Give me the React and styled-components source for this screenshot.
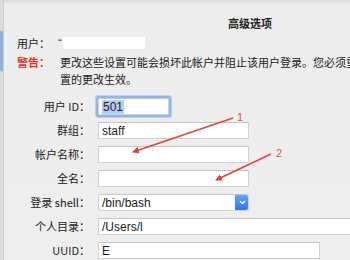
import React from 'react'
import styled, { createGlobalStyle } from 'styled-components'

const GlobalStyle = createGlobalStyle`
  html, body {
    margin: 0;
    padding: 0;
    background: #ececec;
  }
  body {
    font-family: "Noto Sans CJK SC", "Liberation Sans", sans-serif;
    font-size: 11px;
    color: #222;
  }
`

const Screen = styled.div`
  position: relative;
  width: 350px;
  height: 260px;
  overflow: hidden;
  display: flex;
  background: #eeeeee;
`

// window behind the dialog, peeking in at the left edge
const EdgeStrip = styled.div`
  width: 3px;
  flex: none;
  background: linear-gradient(to bottom, #dcdcdc 0, #dcdcdc 30px, #8fb0dc 32px, #8fb0dc 70px, #dcdcdc 72px);
  border-right: 1px solid #cdcdcd;
`

const Sheet = styled.div`
  flex: 1;
  background: linear-gradient(to bottom, #d9d9d9 0, #ededed 5px, #eeeeee 100%);
  padding-top: 15px;
`

const Title = styled.div`
  padding-left: 224px;
  font-size: 11px;
  font-weight: 600;
  line-height: 16px;
  color: #222;
`

const InfoRow = styled.div`
  display: flex;
  align-items: flex-start;
  margin-top: ${p => p.$top || 0}px;
  line-height: 17px;
`

const InfoLabel = styled.span`
  width: 36px;
  padding-left: 13px;
  flex: none;
  color: ${p => (p.$warn ? '#e0362c' : '#222')};
  font-weight: ${p => (p.$warn ? 600 : 400)};
`

const Quote = styled.span`
  margin-left: 5px;
  font-family: "Liberation Sans", sans-serif;
  color: #333;
`

const Redact = styled.span`
  display: inline-block;
  width: ${p => p.$w}px;
  height: 12px;
  margin: 2px 0 0 ${p => p.$left || 0}px;
  background: #ffffff;
`

const WarnText = styled.div`
  white-space: nowrap;
  margin-left: 7px;
`

const Form = styled.div`
  display: grid;
  grid-template-columns: 86px 1fr;
  column-gap: 8px;
  row-gap: 7px;
  margin-top: 10px;
  align-items: center;
`

const Label = styled.div`
  text-align: right;
  line-height: 17px;
  white-space: nowrap;
`

const Field = styled.div`
  box-sizing: border-box;
  width: ${p => p.$w}px;
  height: 17px;
  background: #fff;
  border: 1px solid #d2d2d2;
  border-top-color: #c4c4c4;
  padding-left: 3px;
  display: flex;
  align-items: center;
  font-family: "Liberation Sans", sans-serif;
  font-size: 12px;
  color: #222;
  box-shadow: ${p => (p.$focus ? '0 0 0 2px #8fb4ee, 0 0 0 3px #b9cff3' : 'none')};
  border-radius: ${p => (p.$focus ? '1px' : '0')};
`

const Selected = styled.span`
  background: #b4cdf2;
  padding: 0 1px;
  line-height: 14px;
`

const Popup = styled(Field)`
  padding-right: 0;
  justify-content: space-between;
  border-radius: 3px;
  overflow: hidden;
`

const PopupButton = styled.span`
  width: 14px;
  height: 17px;
  margin: -1px -1px -1px 0;
  border-radius: 0 3px 3px 0;
  background: linear-gradient(to bottom, #6aa6fb, #2f72ea);
  display: flex;
  align-items: center;
  justify-content: center;
`

const Annotations = styled.svg`
  position: absolute;
  left: 0;
  top: 0;
  pointer-events: none;
`

const Num = styled.text`
  font-family: "Liberation Sans", sans-serif;
  font-size: 11px;
  fill: #e05246;
`

const rows = [
  { label: '用户 ID：', value: <Selected>501</Selected>, w: 71, focus: true },
  { label: '群组：', value: 'staff', w: 151 },
  { label: '帐户名称：', value: '', w: 151 },
  { label: '全名：', value: '', w: 151 },
  { label: '登录 shell：', value: '/bin/bash', w: 151, popup: true },
  { label: '个人目录：', value: '/Users/l', w: 280 },
  { label: 'UUID：', value: 'E', w: 222 },
]

export default function App() {
  return (
    <Screen>
      <GlobalStyle />
      <EdgeStrip />
      <Sheet>
        <Title>高级选项</Title>
        <InfoRow $top={4}>
          <InfoLabel>用户：</InfoLabel>
          <Quote>“</Quote>
          <Redact $w={82} $left={1} />
        </InfoRow>
        <InfoRow $top={2}>
          <InfoLabel $warn>警告：</InfoLabel>
          <WarnText>
            更改这些设置可能会损坏此帐户并阻止该用户登录。您必须重新启动电脑才能使这些设
            <br />
            置的更改生效。
          </WarnText>
        </InfoRow>
        <Form>
          {rows.map(r => (
            <React.Fragment key={r.label}>
              <Label>{r.label}</Label>
              {r.popup ? (
                <Popup $w={r.w}>
                  {r.value}
                  <PopupButton>
                    <svg width="7" height="5" viewBox="0 0 7 5">
                      <path d="M1 1 L3.5 3.5 L6 1" fill="none" stroke="#fff" strokeWidth="1.3" />
                    </svg>
                  </PopupButton>
                </Popup>
              ) : (
                <Field $w={r.w} $focus={r.focus}>{r.value}</Field>
              )}
            </React.Fragment>
          ))}
        </Form>
      </Sheet>
      <Annotations width="350" height="260" viewBox="0 0 350 260">
        <defs>
          <marker id="head" markerWidth="8" markerHeight="8" refX="6" refY="4" orient="auto" markerUnits="userSpaceOnUse">
            <path d="M0 0.5 L7 4 L0 7.5 Z" fill="#e0453a" />
          </marker>
        </defs>
        <line x1="233" y1="118" x2="133" y2="152" stroke="#e0453a" strokeWidth="1.6" markerEnd="url(#head)" />
        <Num x="237" y="121">1</Num>
        <line x1="271" y1="154" x2="216" y2="180" stroke="#e0453a" strokeWidth="1.6" markerEnd="url(#head)" />
        <Num x="276" y="157">2</Num>
      </Annotations>
    </Screen>
  )
}
